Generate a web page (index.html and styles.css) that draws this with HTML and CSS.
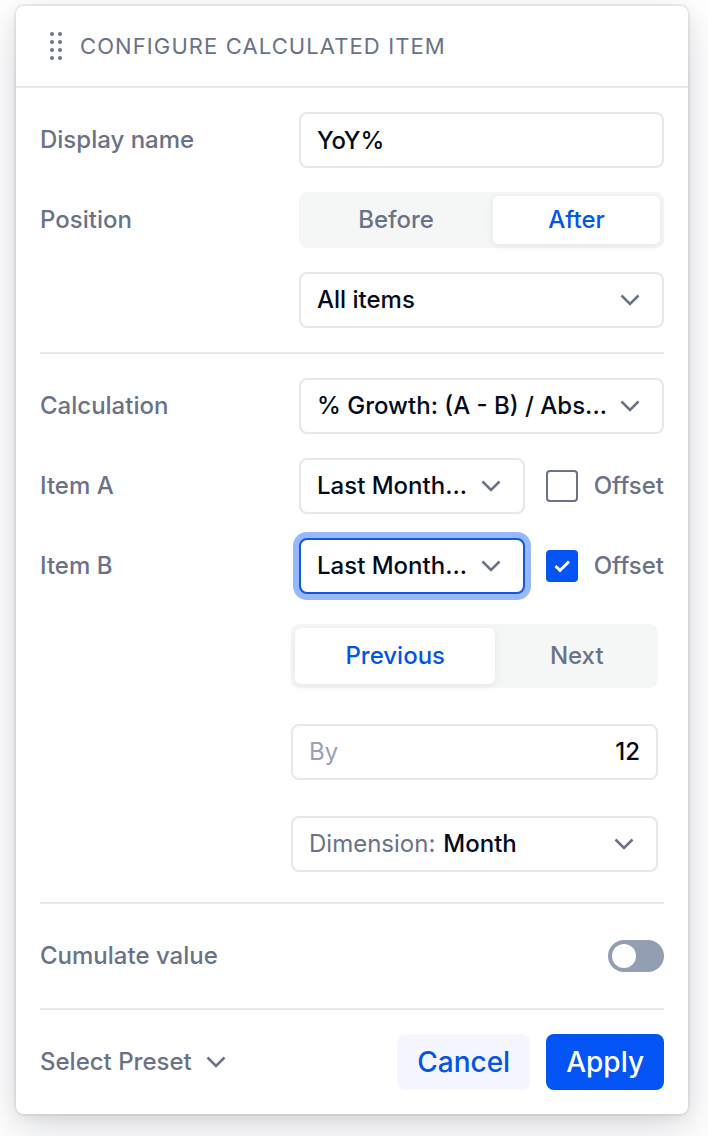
FILE: index.html
```html
<!DOCTYPE html>
<html lang="en">
<head>
<meta charset="utf-8">
<meta name="viewport" content="width=device-width, initial-scale=1">
<title>Configure calculated item</title>
<link rel="stylesheet" href="styles.css">
</head>
<body>
<form class="panel">
  <header class="panel-header">
    <svg class="grip" width="16" height="32" viewBox="0 0 16 32" aria-hidden="true">
      <circle cx="4" cy="4" r="2"/><circle cx="12" cy="4" r="2"/>
      <circle cx="4" cy="12" r="2"/><circle cx="12" cy="12" r="2"/>
      <circle cx="4" cy="20" r="2"/><circle cx="12" cy="20" r="2"/>
      <circle cx="4" cy="28" r="2"/><circle cx="12" cy="28" r="2"/>
    </svg>
    <h1 class="title">Configure calculated item</h1>
  </header>
  <div class="panel-body">
    <section class="section">
      <div class="row">
        <label class="label" for="name">Display name</label>
        <input class="field input" id="name" type="text" value="YoY%">
      </div>
      <div class="row">
        <span class="label" id="position-label">Position</span>
        <div class="segmented" role="group" aria-labelledby="position-label">
          <button class="segment" type="button" aria-pressed="false">Before</button>
          <button class="segment selected" type="button" aria-pressed="true">After</button>
        </div>
      </div>
      <div class="row">
        <span></span>
        <div class="field select-field">
          <select class="select" aria-label="Position relative to"><option>All items</option></select>
          <svg class="chevron" width="20" height="12" viewBox="0 0 20 12" aria-hidden="true"><path d="M1.500 1.500l8.500 8.500 8.500-8.500"/></svg>
        </div>
      </div>
    </section>

    <section class="section">
      <div class="row">
        <label class="label" for="calculation">Calculation</label>
        <div class="field select-field">
          <select class="select" id="calculation"><option>% Growth: (A - B) / Abs...</option></select>
          <svg class="chevron" width="20" height="12" viewBox="0 0 20 12" aria-hidden="true"><path d="M1.500 1.500l8.500 8.500 8.500-8.500"/></svg>
        </div>
      </div>
      <div class="row">
        <label class="label" for="item-a">Item A</label>
        <div class="item">
          <div class="field select-field">
            <select class="select" id="item-a"><option>Last Month...</option></select>
            <svg class="chevron" width="20" height="12" viewBox="0 0 20 12" aria-hidden="true"><path d="M1.500 1.500l8.500 8.500 8.500-8.500"/></svg>
          </div>
          <label class="check"><span class="box"><input class="checkbox" type="checkbox"></span>Offset</label>
        </div>
      </div>
      <div class="row">
        <label class="label" for="item-b">Item B</label>
        <div class="item">
          <div class="field select-field focused">
            <select class="select" id="item-b"><option>Last Month...</option></select>
            <svg class="chevron" width="20" height="12" viewBox="0 0 20 12" aria-hidden="true"><path d="M1.500 1.500l8.500 8.500 8.500-8.500"/></svg>
          </div>
          <label class="check"><span class="box"><input class="checkbox" type="checkbox" checked><svg class="tick" width="32" height="32" viewBox="0 0 32 32" aria-hidden="true"><path d="M9.500 16l4.500 4.500 9-9"/></svg></span>Offset</label>
        </div>
      </div>
      <div class="offset">
        <div class="segmented tall" role="group" aria-label="Offset direction">
          <button class="segment selected" type="button" aria-pressed="true">Previous</button>
          <button class="segment" type="button" aria-pressed="false">Next</button>
        </div>
        <div class="field amount">
          <label class="amount-label" for="by">By</label>
          <input class="amount-input" id="by" type="text" inputmode="numeric" value="12">
        </div>
        <div class="field select-field prefixed">
          <label class="prefix" for="dimension">Dimension:</label>
          <select class="select" id="dimension"><option>Month</option></select>
          <svg class="chevron" width="20" height="12" viewBox="0 0 20 12" aria-hidden="true"><path d="M1.500 1.500l8.500 8.500 8.500-8.500"/></svg>
        </div>
      </div>
    </section>

    <section class="section">
      <div class="toggle-row">
        <label class="label" for="cumulate">Cumulate value</label>
        <input class="switch" id="cumulate" type="checkbox" role="switch">
      </div>
    </section>

    <footer class="section actions">
      <button class="preset" type="button">Select Preset
        <svg class="preset-icon" width="20" height="12" viewBox="0 0 20 12" aria-hidden="true"><path d="M1.500 1.500l8.500 8.500 8.500-8.500"/></svg>
      </button>
      <button class="button" type="button">Cancel</button>
      <button class="button primary" type="submit">Apply</button>
    </footer>
  </div>
</form>
</body>
</html>
```
FILE: styles.css
```css
* {
  box-sizing: border-box;
}

body {
  margin: 0;
  padding: 6px 20px 22px 16px;
  background: #fff;
  color: #030b20;
  font: 500 24px/32px Inter, sans-serif;
}

button,
input,
select {
  margin: 0;
  font: inherit;
  color: inherit;
}

.panel {
  border-radius: 8px;
  background: #fff;
  box-shadow: 0 0 0 2px rgba(17, 24, 39, 0.06), 0 4px 16px rgba(17, 24, 39, 0.08), 0 16px 48px rgba(17, 24, 39, 0.14);
}

.panel-header {
  display: flex;
  align-items: center;
  gap: 16px;
  height: 82px;
  padding: 0 32px;
  border-bottom: 2px solid #e7e8ed;
}

.grip {
  fill: #6b7489;
}

.title {
  margin: 0;
  color: #6b7288;
  font-size: 22px;
  font-weight: 400;
  letter-spacing: 0.05em;
  text-transform: uppercase;
}

.panel-body {
  padding: 0 24px;
}

.section {
  display: flex;
  flex-direction: column;
  gap: 24px;
  padding: 24px 0;
}

.section + .section {
  border-top: 2px solid #e7e8ed;
}

.row {
  display: grid;
  grid-template-columns: 259px minmax(0, 1fr);
  align-items: center;
}

.label {
  color: #6b7288;
}

.field {
  width: 100%;
  height: 56px;
  border: 2px solid #e6e7eb;
  border-radius: 8px;
  background: #fff;
}

.input {
  padding: 0 16px;
}

.select-field {
  position: relative;
  display: flex;
  align-items: center;
}

.select {
  flex: 1;
  min-width: 0;
  height: 100%;
  padding: 0 48px 0 16px;
  border: 0;
  border-radius: 6px;
  outline: 0;
  background: none;
  appearance: none;
}

.chevron {
  position: absolute;
  right: 22px;
  pointer-events: none;
}

.chevron,
.preset-icon {
  fill: none;
  stroke: #6b7288;
  stroke-width: 2.5;
}

.focused {
  border-color: #1557d6;
  box-shadow: 0 0 0 6px #96b8ff;
}

.item {
  display: flex;
  align-items: center;
  gap: 21px;
}

.item .field {
  flex: 1;
  min-width: 0;
}

.check {
  display: flex;
  align-items: center;
  gap: 16px;
  color: #6b7288;
}

.box {
  display: grid;
  width: 32px;
  height: 32px;
}

.checkbox,
.tick {
  grid-area: 1 / 1;
}

.checkbox {
  width: 32px;
  height: 32px;
  border: 2px solid #6b7288;
  border-radius: 4px;
  background: #fff;
  appearance: none;
}

.checkbox:checked {
  border-color: #0454f5;
  background: #0454f5;
}

.tick {
  fill: none;
  stroke: #fff;
  stroke-width: 3;
  pointer-events: none;
}

.segmented {
  display: flex;
  gap: 4px;
  height: 56px;
  padding: 4px;
  border-radius: 8px;
  background: #f5f7f7;
}

.tall {
  height: 64px;
}

.segment {
  flex: 1 1 auto;
  padding: 0;
  border: 0;
  border-radius: 6px;
  background: none;
  color: #6b7288;
}

.segment.selected {
  background: #fff;
  color: #0454e5;
  box-shadow: 0 2px 8px rgba(17, 24, 39, 0.08);
}

.offset {
  display: flex;
  flex-direction: column;
  gap: 36px;
  margin: 6px 6px 6px 251px;
}

.amount {
  display: flex;
  align-items: center;
  gap: 16px;
  padding: 0 16px;
}

.amount-label {
  color: #98a1b5;
  font-weight: 400;
}

.amount-input {
  flex: 1;
  min-width: 0;
  padding: 0;
  border: 0;
  outline: 0;
  background: none;
  text-align: right;
}

.prefixed {
  padding-left: 16px;
}

.prefix {
  color: #6b7288;
  font-weight: 400;
}

.prefixed .select {
  padding-left: 8px;
}

.toggle-row {
  display: flex;
  align-items: center;
  justify-content: space-between;
  height: 56px;
}

.switch {
  display: flex;
  width: 56px;
  height: 32px;
  padding: 4px;
  border-radius: 16px;
  background: #939eb2;
  appearance: none;
}

.switch::before {
  content: "";
  width: 24px;
  height: 24px;
  border-radius: 50%;
  background: #fff;
}

.switch:checked {
  justify-content: flex-end;
  background: #0454f5;
}

.actions {
  flex-direction: row;
  align-items: center;
  gap: 16px;
}

.preset {
  display: flex;
  align-items: center;
  gap: 14px;
  margin-right: auto;
  padding: 0;
  border: 0;
  background: none;
  color: #6b7288;
}

.button {
  height: 56px;
  padding: 0 20px;
  border: 0;
  border-radius: 8px;
  background: #f5f6ff;
  color: #0454e5;
  font-size: 28px;
}

.primary {
  background: #0454f5;
  color: #fff;
}
```
